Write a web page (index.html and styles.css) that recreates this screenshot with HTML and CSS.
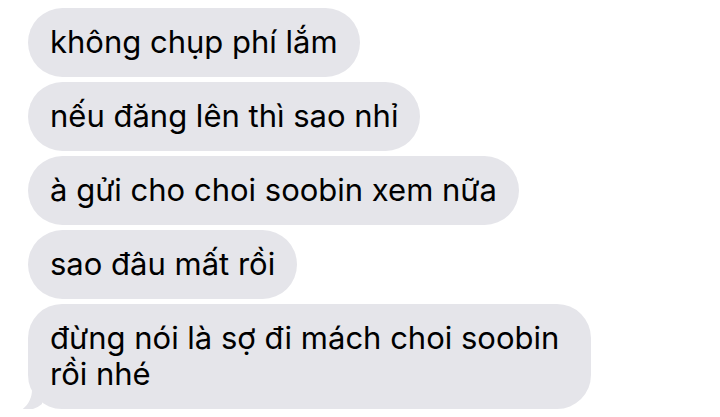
FILE: index.html
```html
<!DOCTYPE html>
<html lang="vi">
<head>
  <meta charset="UTF-8" />
  <title>Tin nhắn</title>
  <link rel="stylesheet" href="styles.css">
</head>
<body>
  <main class="thread">
    <div class="bubble">không chụp phí lắm</div>
    <div class="bubble">nếu đăng lên thì sao nhỉ</div>
    <div class="bubble">à gửi cho choi soobin xem nữa</div>
    <div class="bubble">sao đâu mất rồi</div>
    <div class="bubble bubble-last">đừng nói là sợ đi mách choi soobin<br>rồi nhé
      <svg class="tail" width="24" height="22" viewBox="0 0 24 22">
        <path d="M14 0 C14 8 10 16 2 21 C10 21 18 19 24 14 L24 0 Z" fill="#e5e5ea" />
      </svg>
    </div>
  </main>
</body>
</html>
```

FILE: styles.css
```css
* {
    box-sizing: border-box;
}
html, body {
    margin: 0;
    padding: 0;
    background: #fff;
}
.thread {
    padding: 8px 0 0 28px;
    display: flex;
    flex-direction: column;
    align-items: flex-start;
    gap: 5px;
}
.bubble {
    position: relative;
    padding: 16px 22px 17px 22px;
    font-family: Inter, "Noto Sans", sans-serif;
    font-size: 31px;
    line-height: 36px;
    color: #000;
    background: #e5e5ea;
    border-radius: 35px;
}
.bubble-last {
    padding-right: 32px;
    border-radius: 34px;
}
.tail {
    position: absolute;
    left: -10px;
    bottom: -3px;
}
```
